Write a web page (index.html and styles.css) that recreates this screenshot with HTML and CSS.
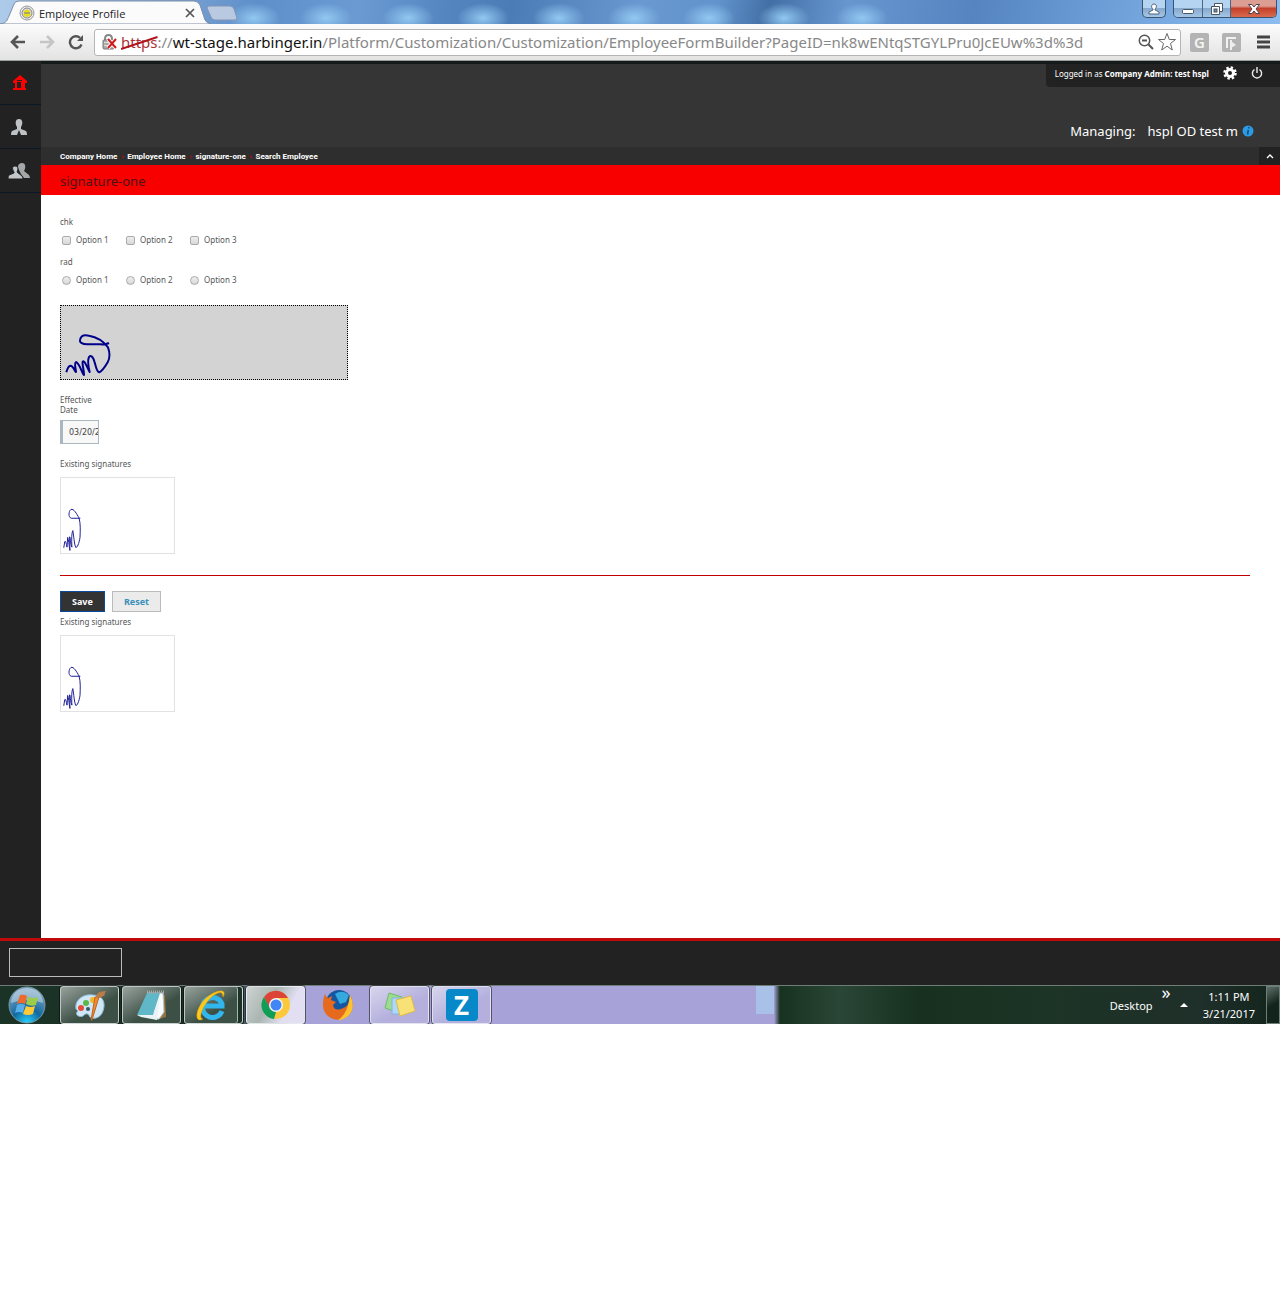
FILE: index.html
```
<!DOCTYPE html>
<html lang="en">
<head>
    <meta charset="UTF-8">
    <meta name="viewport" content="width=device-width, initial-scale=1.0">
    <title>Employee Profile</title>
    <link rel="stylesheet" href="styles.css">
</head>
<body>
    <!-- Shared shapes -->
    <svg class="defs" aria-hidden="true">
        <symbol id="smallSignature" viewBox="0 0 345 231">
            <path d="M58 124H30C20 121 22 102 29 97C38 93 47 111 54 123C59 141 58 161 57 183C54 203 48 215 44 214C39 203 38 179 35 162C31 169 31 189 32 213C27 201 27 181 25 181L26 223C23 207 22 189 19 183L17 213C14 198 12 192 10 196L7 215" fill="none" stroke="#1a1a95" stroke-width="3"/>
        </symbol>
    </svg>

    <div class="titlebar">
        <div class="tab">
            <svg class="tab-shape" viewBox="0 0 212 24" preserveAspectRatio="none"><path d="M0 24C7 23 7 20 9 16L14 4Q15 1 19 1H194Q198 1 200 5L205 20Q207 24 212 24Z" fill="#fbfbfc" stroke="#7c8ea6"/></svg>
            <svg class="favicon" viewBox="0 0 16 16"><circle cx="8" cy="8" r="7" fill="#eee" stroke="#999"/><circle cx="8" cy="8" r="5" fill="#d9d9dd" stroke="#888"/><path d="M4 7Q8 2 12 7L10 8L12 10Q8 14 4 10L6 8Z" fill="#e8dc20"/><path d="M5 8H11" stroke="#777"/></svg>
            <span class="tab-title">Employee Profile</span>
            <button class="tab-close" aria-label="Close tab"><svg width="10" height="10" viewBox="0 0 10 10"><path d="M1 1L9 9M9 1L1 9" stroke="#555" stroke-width="1.7"/></svg></button>
        </div>
        <button class="new-tab" aria-label="New tab"><svg width="32" height="16" viewBox="0 0 32 16"><path d="M3 1H24Q27 1 28 4L31 13Q31 15 29 15H9Q6 15 5 12L1 3Q1 1 3 1Z" fill="#b9c9e2" stroke="#8195b3"/></svg></button>
        <div class="window-buttons">
            <button class="user-btn" aria-label="User"><svg width="12" height="12" viewBox="0 0 12 12"><path d="M6 1C9 1 9 5 7 6V7L11 9V11H1V9L5 7V6C3 5 3 1 6 1Z" fill="#fff" stroke="#51657e"/></svg></button>
            <div class="window-group">
                <button aria-label="Minimize"><svg width="14" height="14" viewBox="0 0 14 14"><rect x="1.500" y="7.500" width="11" height="4" rx="1" fill="#fff" stroke="#4b5563"/></svg></button>
                <button aria-label="Restore"><svg width="14" height="14" viewBox="0 0 14 14"><path d="M4.500 1.500H12.500V9.500H4.500Z" fill="#fff" stroke="#4b5563"/><path d="M1.500 4.500H9.500V12.500H1.500Z" fill="#fff" stroke="#4b5563"/><rect x="4" y="7" width="3" height="3" fill="#6b89ad" stroke="#4b5563"/></svg></button>
                <button class="window-close" aria-label="Close"><svg width="14" height="14" viewBox="0 0 14 14"><path d="M1.500 2.500H5L7 5L9 2.500H12.500L9 7L12.500 11.500H9L7 9L5 11.500H1.500L5 7Z" fill="#fff" stroke="#54404a"/></svg></button>
            </div>
        </div>
    </div>

    <div class="toolbar">
        <button aria-label="Back"><svg width="16" height="14" viewBox="0 0 16 14"><path d="M8 1L2 7L8 13M2 7H15" fill="none" stroke="#555" stroke-width="2.6"/></svg></button>
        <button aria-label="Forward"><svg width="16" height="14" viewBox="0 0 16 14"><path d="M8 1L14 7L8 13M14 7H1" fill="none" stroke="#c5c5c5" stroke-width="2.6"/></svg></button>
        <button aria-label="Reload"><svg width="16" height="16" viewBox="0 0 16 16"><path d="M13.500 10.500A6 6 0 1 1 12 3.800" fill="none" stroke="#555" stroke-width="2.4"/><path d="M15 1V7H9Z" fill="#555"/></svg></button>
        <div class="address" role="textbox" aria-label="Address">
            <svg class="lock" width="16" height="16" viewBox="0 0 16 16"><path d="M3 7V5Q3 1 6.500 1Q10 1 10 5V7" fill="none" stroke="#888" stroke-width="2"/><rect x="1" y="6" width="11" height="9" rx="1" fill="#aaa" stroke="#777"/><path d="M2 8.500H9M2 11.500H9" stroke="#ddd"/><path d="M6 5L14 14M14 5L6 14" stroke="#fff" stroke-width="4"/><path d="M6 5L14 14M14 5L6 14" stroke="#d0181c" stroke-width="2"/></svg>
            <span class="url"><span class="scheme">https<svg class="strike" viewBox="0 0 38 14" preserveAspectRatio="none"><path d="M0 13L38 1" stroke="#b0151b" stroke-width="2"/></svg></span>://<span class="host">wt-stage.harbinger.in</span>/Platform/Customization/Customization/EmployeeFormBuilder?PageID=nk8wENtqSTGYLPru0JcEUw%3d%3d</span>
            <svg width="16" height="16" viewBox="0 0 16 16"><circle cx="6.500" cy="6.500" r="5.200" fill="none" stroke="#555" stroke-width="1.500"/><path d="M4 6.500H9M10.500 10.500L15 15" stroke="#555" stroke-width="2"/></svg>
            <svg width="20" height="20" viewBox="0 0 20 20"><path d="M10 1.500L12.300 7.500H18.500L13.500 11.500L15.300 18L10 14.200L4.700 18L6.500 11.500L1.500 7.500H7.700Z" fill="#fff" stroke="#666"/></svg>
        </div>
        <button class="extension" aria-label="Extension G">G</button>
        <button class="extension" aria-label="Extension"><svg width="19" height="19" viewBox="0 0 19 19"><path d="M5 15V5H14" fill="none" stroke="#f1f1f1" stroke-width="2"/><path d="M9 7V17" stroke="#eee" stroke-width="2"/><path d="M9 8L14 12L9 15Z" fill="#eee"/></svg></button>
        <button class="menu-btn" aria-label="Menu"><svg width="14" height="14" viewBox="0 0 14 14"><path d="M1 2H14M1 7H14M1 12H14" stroke="#444" stroke-width="2.800"/></svg></button>
    </div>

    <div class="app">
        <nav class="sidebar">
            <a href="#" aria-label="Home"><svg width="16" height="16" viewBox="0 0 16 16"><path d="M8 0L15 6V8H1V6Z" fill="#f00"/><path d="M3 7H13V13H14V15H1V13H3Z" fill="#f00"/><rect x="5" y="7" width="4" height="6" fill="#222"/><path d="M5 5.500H10" stroke="#222"/></svg></a>
            <a href="#" aria-label="Employee"><svg width="18" height="18" viewBox="0 0 18 18"><path d="M9 1C13 1 13 6 11 9V11L16 13Q17 14 17 17H11L9 12L7 17H1Q1 14 2 13L7 11V9C5 6 5 1 9 1Z" fill="#bfc2c4"/></svg></a>
            <a href="#" aria-label="Employees"><svg width="22" height="18" viewBox="0 0 22 18"><path d="M14 1C18 1 18 6 16 9L21 13Q22 15 22 16H16L13 12L11 8C9 5 10 1 14 1Z" fill="#a4a7a9"/><path d="M7 4C11 4 10 8 9 10L14 14Q15 15 15 17H0Q0 14 1 13L6 11V10C4 7 4 4 7 4Z" fill="#c3c6c8" stroke="#222"/></svg></a>
        </nav>

        <div class="page">
            <header class="header">
                <div class="user-bar">
                    <span>Logged in as <b>Company Admin: test hspl</b></span>
                    <a href="#" aria-label="Settings"><svg width="14" height="14" viewBox="0 0 14 14"><circle cx="7" cy="7" r="5.500" fill="none" stroke="#fff" stroke-width="2.500" stroke-dasharray="2.320 2"/><circle cx="7" cy="7" r="3.500" fill="none" stroke="#fff" stroke-width="3"/></svg></a>
                    <a href="#" aria-label="Log out"><svg width="12" height="12" viewBox="0 0 12 12"><path d="M3.500 2.500A4.600 4.600 0 1 0 8.500 2.500M6 0V6" fill="none" stroke="#eee" stroke-width="1.400"/></svg></a>
                </div>
                <div class="managing">
                    <span>Managing:</span>
                    <span>hspl OD test m</span>
                    <svg width="12" height="12" viewBox="0 0 12 12"><circle cx="6" cy="6" r="5.500" fill="#2c9be6"/><path d="M6.800 2V3.500M6.300 5L5.500 9.500" stroke="#174b75" stroke-width="1.600"/></svg>
                </div>
            </header>

            <nav class="breadcrumb">
                <a href="#">Company Home</a><span>»</span>
                <a href="#">Employee Home</a><span>»</span>
                <a href="#">signature-one</a><span>»</span>
                <a href="#">Search Employee</a>
                <button class="collapse-btn" aria-label="Collapse header"><svg width="8" height="6" viewBox="0 0 8 6"><path d="M1 5L4 2L7 5" fill="none" stroke="#fff" stroke-width="1.300"/></svg></button>
            </nav>

            <h1 class="page-title">signature-one</h1>

            <form class="content">
                <fieldset>
                    <legend>chk</legend>
                    <div class="options">
                        <label><input type="checkbox" name="chk">Option 1</label>
                        <label><input type="checkbox" name="chk">Option 2</label>
                        <label><input type="checkbox" name="chk">Option 3</label>
                    </div>
                </fieldset>
                <fieldset>
                    <legend>rad</legend>
                    <div class="options">
                        <label><input type="radio" name="rad">Option 1</label>
                        <label><input type="radio" name="rad">Option 2</label>
                        <label><input type="radio" name="rad">Option 3</label>
                    </div>
                </fieldset>

                <div class="signature-pad">
                    <svg width="144" height="73" viewBox="3 3 432 219"><path d="M147 114Q135 120 122 118H82C65 118 58 111 60 104C63 91 74 89 87 92C111 96 132 111 144 127C151 146 149 161 143 172C136 184 123 200 118 202C109 200 108 183 103 169C98 151 91 151 87 156C81 168 86 188 89 201C79 184 74 164 68 170C66 180 73 198 72 210C66 205 59 175 48 171C41 175 49 198 48 201C42 195 39 181 31 182C24 184 22 190 19 202" fill="none" stroke="#00008b" stroke-width="6" stroke-linejoin="round"/></svg>
                </div>

                <div class="date-field">
                    <label for="effectiveDate">Effective Date</label>
                    <input type="text" id="effectiveDate" value="03/20/2017">
                </div>

                <p class="caption">Existing signatures</p>
                <div class="signature-box"><svg><use href="#smallSignature"/></svg></div>

                <hr>

                <div class="actions">
                    <button type="submit" class="save-btn">Save</button>
                    <button type="reset" class="reset-btn">Reset</button>
                </div>

                <p class="caption">Existing signatures</p>
                <div class="signature-box"><svg><use href="#smallSignature"/></svg></div>
            </form>
        </div>
    </div>

    <footer class="footer">
        <div class="footer-logo"></div>
    </footer>

    <div class="taskbar">
        <button class="start" aria-label="Start"><svg width="38" height="38" viewBox="0 0 38 38">
            <defs><radialGradient id="orb" cx=".5" cy="1" r=".9"><stop offset="0" stop-color="#28d5ff"/><stop offset=".45" stop-color="#12689f"/><stop offset="1" stop-color="#78a2c3"/></radialGradient></defs>
            <circle cx="19" cy="19" r="18" fill="url(#orb)" stroke="#7897a3"/>
            <path d="M3 17Q4 3 19 2Q34 3 35 17Q19 11 3 17Z" fill="#d5e4ee" opacity=".5"/>
            <path d="M12 9Q16 8 19 10L17 18Q13 16 9 18Z" fill="#ee6a2c"/><path d="M20 11Q25 13 30 11L28 19Q23 21 18 18Z" fill="#9ccc48"/><path d="M9 19Q13 17 17 19L15 27Q11 25 7 27Z" fill="#58aee8"/><path d="M18 20Q23 22 27 20L25 28Q20 30 15 28Z" fill="#ffca35"/>
        </svg></button>
        <button class="task" aria-label="Paint"><svg width="34" height="34" viewBox="0 0 34 34"><path d="M3 21C1 12 11 5 20 7C30 7 33 15 30 23C28 30 20 32 17 29C15 25 13 25 10 28C6 30 1 26 5 23Z" fill="#cfe6f6" stroke="#89b9d6"/><circle cx="8" cy="20" r="3" fill="#e64c39"/><circle cx="13" cy="15" r="3" fill="#58b947"/><circle cx="20" cy="12" r="3" fill="#f4b52d"/><circle cx="15" cy="21" r="2" fill="#3a5866"/><path d="M26 9L19 32L18 32L22 9Z" fill="#ef8b31" stroke="#be6322"/><path d="M23 9Q23 3 33 3Q31 6 32 7L27 10Z" fill="#b87c49"/></svg></button>
        <button class="task" aria-label="Notepad"><svg width="34" height="34" viewBox="0 0 34 34"><path d="M15 6L30 7L31 29L24 31Z" fill="#98743d"/><path d="M13 5H28L29 24L24 31H20Z" fill="#f7fbfb" stroke="#b6c7cb"/><path d="M12 5H25L18 27H2Z" fill="#60b7c8"/><path d="M2 27H18L25 8L22 32L6 29Z" fill="#e9f3f5"/><path d="M12 4H29" stroke="#aaa" stroke-width="3" stroke-dasharray="1 1"/></svg></button>
        <button class="task stacked" aria-label="Internet Explorer"><svg width="34" height="34" viewBox="0 0 34 34"><path d="M28 23A10 10 0 1 1 28 16V18H9" fill="none" stroke="#31b7ed" stroke-width="5"/><path d="M29 9C34 0 22 1 11 11C1 21 0 36 9 31C3 31 10 14 20 7Q29 1 29 9Z" fill="#ffc91b" stroke="#d79e0d" stroke-width=".5"/></svg></button>
        <button class="task active" aria-label="Chrome"><svg width="32" height="32" viewBox="0 0 32 32"><circle cx="16" cy="16" r="14" fill="#fdc93c"/><path d="M4 8A14 14 0 0 1 28 9H16L10 20Z" fill="#db4437"/><path d="M4 8L10 19L16 23L14 30A14 14 0 0 1 4 8Z" fill="#0f9d58"/><circle cx="16" cy="16" r="7" fill="#f4f4f4"/><circle cx="16" cy="16" r="5.500" fill="#4285f4"/></svg></button>
        <button class="task plain" aria-label="Firefox"><svg width="32" height="32" viewBox="0 0 32 32"><circle cx="17" cy="14" r="13" fill="#1556a0"/><path d="M13 5Q20 0 27 6L24 13L18 15Z" fill="#35a9dd"/><path d="M3 5Q4 8 6 9L10 7L9 11L14 13L11 16Q12 22 19 20Q28 18 28 6Q34 18 27 26C17 36 1 29 1 16Q1 9 3 5Z" fill="#e56a1e"/><path d="M28 6Q34 18 27 26Q22 31 16 31Q26 25 28 6Z" fill="#ffc32d"/></svg></button>
        <button class="task" aria-label="Sticky Notes"><svg width="34" height="32" viewBox="0 0 34 32"><path d="M6 4L19 8L14 23L2 19Z" fill="#9ddb8d" stroke="#72bb6d"/><path d="M9 9H22V25H9Z" fill="#aed8f7" stroke="#82b4e3"/><path d="M13 11L28 7L32 22L17 27Z" fill="#f8e177" stroke="#dfbc42"/></svg></button>
        <button class="task" aria-label="Z"><span class="zoho">Z</span></button>
        <div class="tray">
            <span class="desktop">Desktop</span>
            <span class="chevrons">»</span>
            <svg width="8" height="5" viewBox="0 0 8 5"><path d="M4 0L8 4H0Z" fill="#fff"/></svg>
            <div class="clock"><div>1:11 PM</div><div>3/21/2017</div></div>
        </div>
        <button class="show-desktop" aria-label="Show desktop"></button>
    </div>
</body>
</html>
```
FILE: styles.css
```
* {
    margin: 0;
    padding: 0;
    box-sizing: border-box;
}

body {
    font-family: "Noto Sans", sans-serif;
    background: #fff;
}

button {
    font-family: inherit;
    border: none;
    background: none;
    cursor: pointer;
}

a {
    color: inherit;
    text-decoration: none;
}

svg {
    display: block;
    flex: none;
}

.defs {
    display: none;
}

/* Browser window */
.titlebar {
    display: flex;
    height: 24px;
    background:
        radial-gradient(ellipse 26px 15px at 254px 18px, #91c8f1, transparent),
        radial-gradient(ellipse 26px 15px at 326px 18px, #91c8f1, transparent),
        radial-gradient(ellipse 26px 15px at 408px 18px, #91c8f1, transparent),
        radial-gradient(ellipse 26px 15px at 483px 18px, #91c8f1, transparent),
        radial-gradient(ellipse 26px 15px at 559px 18px, #91c8f1, transparent),
        radial-gradient(ellipse 26px 15px at 634px 18px, #91c8f1, transparent),
        radial-gradient(ellipse 26px 15px at 709px 18px, #91c8f1, transparent),
        radial-gradient(ellipse 26px 15px at 784px 18px, #91c8f1, transparent),
        radial-gradient(ellipse 26px 15px at 862px 18px, #91c8f1, transparent),
        linear-gradient(100deg, #aecbea 0%, #5f8fc9 20%, #6b9ad3 28%, #5585bf 35%, #4c7cb6 40%, #6a98d0 50%, #6293cc 56%, #426fa5 60%, #6796cf 66%, #5584c0 76%, #76a8df 90%, #8cbcf0 100%);
}

.tab {
    position: relative;
    display: flex;
    align-items: center;
    width: 212px;
    padding: 2px 17px 0 19px;
    gap: 4px;
}

.tab-shape {
    position: absolute;
    left: 0;
    top: 0;
    width: 100%;
    height: 100%;
}

.favicon {
    position: relative;
    width: 16px;
    height: 16px;
}

.tab-title {
    position: relative;
    flex: 1;
    font-family: "Open Sans", sans-serif;
    font-size: 11px;
    color: #222;
    white-space: nowrap;
}

.tab-close {
    position: relative;
}

.new-tab {
    margin-left: -6px;
    padding: 0 0 3px;
    align-self: flex-end;
}

.window-buttons {
    display: flex;
    gap: 7px;
    align-items: flex-start;
    margin-left: auto;
    padding-right: 3px;
}

.window-buttons button {
    display: flex;
    align-items: center;
    justify-content: center;
    height: 17px;
    width: 28px;
    background: linear-gradient(#b5d4f2 45%, #86a9cd 50%, #a4c6e6);
}

.window-buttons .user-btn,
.window-group {
    border: 1px solid #3a5470;
    border-top: none;
    border-radius: 0 0 5px 5px;
    overflow: hidden;
}

.window-buttons .user-btn {
    width: 24px;
    height: 18px;
}

.window-group {
    display: flex;
}

.window-group button + button {
    border-left: 1px solid #4b6682;
}

.window-buttons .window-close {
    width: 46px;
    background: linear-gradient(#dc9d93 35%, #c4402a 50%, #d86a4e);
}

.toolbar {
    display: flex;
    align-items: center;
    gap: 13px;
    height: 37px;
    padding: 0 10px;
    background: linear-gradient(#fbfbfb, #e3e3e3);
    border-bottom: 1px solid #9aa09c;
}

.address {
    flex: 1;
    min-width: 0;
    display: flex;
    align-items: center;
    gap: 3px;
    height: 27px;
    padding: 0 3px 0 7px;
    margin-right: -4px;
    margin-left: -3px;
    background: #fff;
    border: 1px solid #b5b5b5;
    border-radius: 3px;
}

.url {
    flex: 1;
    font-size: 15px;
    line-height: 24px;
    color: #888;
    white-space: nowrap;
}

.scheme {
    position: relative;
    color: #a8343a;
}

.strike {
    position: absolute;
    left: 0;
    top: 4px;
    width: 100%;
    height: 14px;
}

.host {
    color: #111;
}

.extension {
    width: 19px;
    height: 19px;
    border-radius: 2px;
    background: #b3b3b3;
    color: #f3f3f3;
    font-size: 15px;
    font-weight: 600;
    line-height: 19px;
}

.menu-btn {
    margin-left: 2px;
}

/* Application */
.app {
    display: flex;
    min-height: 877px;
}

.sidebar {
    width: 41px;
    background: #222;
}

.sidebar a {
    display: flex;
    align-items: center;
    justify-content: center;
    height: 44px;
    padding-right: 4px;
    border-bottom: 1px solid #0c1726;
}

.sidebar a:first-child {
    padding-right: 2px;
}

.page {
    flex: 1;
    min-width: 0;
}

.header {
    display: flex;
    flex-direction: column;
    align-items: flex-end;
    height: 86px;
    background: #353535;
    border-top: 3px solid #141a1a;
}

.user-bar {
    display: flex;
    align-items: center;
    gap: 14px;
    height: 23px;
    padding: 0 17px 5px 9px;
    border-radius: 0 0 0 4px;
    background: #222;
    color: #fff;
    font-size: 8px;
}

.managing {
    display: flex;
    align-items: center;
    gap: 4px;
    padding: 34px 26px 0 0;
    color: #fff;
    font-size: 13px;
    line-height: 20px;
}

.managing span:first-child {
    margin-right: 8px;
}

.breadcrumb {
    display: flex;
    align-items: center;
    gap: 3px;
    height: 18px;
    padding-left: 19px;
    background: #2e2e2e;
    color: #fff;
    font-family: Roboto, sans-serif;
    font-size: 8px;
    font-weight: bold;
}

.breadcrumb span {
    color: #a01010;
    font-weight: normal;
}

.collapse-btn {
    display: flex;
    align-items: center;
    justify-content: center;
    width: 21px;
    height: 18px;
    margin-left: auto;
    background: #222;
}

.page-title {
    padding: 2px 19px 0;
    background: #f80000;
    color: #4a1414;
    font-size: 13px;
    font-weight: normal;
    line-height: 28px;
}

.content {
    padding: 22px 30px 20px 19px;
    font-size: 8px;
    line-height: 10px;
    color: #555;
}

fieldset {
    border: none;
    margin-bottom: 12px;
}

.options {
    display: flex;
    padding-top: 8px;
}

.options label {
    display: flex;
    align-items: center;
    gap: 5px;
    width: 64px;
    height: 10px;
    padding-left: 2px;
}

.options input {
    appearance: none;
    width: 9px;
    height: 9px;
    border: 1px solid #aaa;
    border-radius: 2px;
    background: linear-gradient(#eee, #d8d8d8);
}

.options input[type="radio"] {
    border-radius: 50%;
}

.options input:checked {
    background: #555;
}

.signature-pad {
    width: 288px;
    height: 75px;
    margin: 20px 0 15px;
    border: 1px dotted #000;
    background: #d3d3d3;
}

.date-field {
    width: 39px;
    margin-bottom: 15px;
}

.date-field label {
    display: block;
    margin-bottom: 5px;
}

.date-field input {
    display: block;
    width: 100%;
    height: 24px;
    padding-left: 6px;
    border: 1px solid #a9b8c0;
    border-left-width: 3px;
    background: #f8f8f8;
    color: #444;
    font-family: "DejaVu Sans", sans-serif;
    font-size: 8px;
}

.signature-box {
    width: 115px;
    height: 77px;
    margin-top: 8px;
    border: 1px solid #e2e2e2;
}

.signature-box svg {
    width: 100%;
    height: 100%;
}

hr {
    margin: 21px 0 15px;
    border: none;
    border-top: 1px solid #c00000;
}

.actions {
    display: flex;
    gap: 7px;
    margin-bottom: 5px;
}

.actions button {
    height: 21px;
    padding: 0 11px;
    border: 1px solid #bbb;
    font-size: 9px;
    font-weight: bold;
}

.actions .save-btn {
    border-color: #0a4a9c;
    background: #333;
    color: #fff;
}

.actions .reset-btn {
    background: #ebebeb;
    color: #3a8fba;
}

.footer {
    height: 47px;
    padding: 7px 9px;
    border-top: 3px solid #c00a0a;
    background: #222;
}

.footer-logo {
    width: 113px;
    height: 29px;
    border: 1px solid #bbb;
}

/* Windows taskbar */
.taskbar {
    display: flex;
    height: 39px;
    gap: 3px;
    padding-left: 8px;
    border-top: 1px solid #6f7d78;
    background:
        linear-gradient(90deg, #a9c0e8, #a9c0e8) 756px 0 / 18px 28px no-repeat,
        linear-gradient(90deg, #1b3226 242px, #a7a2d8 250px, #a7a2d8 774px, #17321f 780px, #2a4636 840px, #17301f 920px, #1c3425 1040px, #1f2f2a 1200px, #12241c);
    color: #fff;
}

.start {
    width: 38px;
    margin-right: 11px;
}

.task {
    display: flex;
    align-items: center;
    justify-content: center;
    width: 59px;
    border: 1px solid rgba(235, 240, 240, 0.75);
    border-radius: 3px;
    outline: 1px solid rgba(0, 0, 0, 0.5);
    outline-offset: 0;
    background: linear-gradient(150deg, rgba(255, 255, 255, 0.55), rgba(255, 255, 255, 0.15) 60%);
}

.task.stacked {
    padding-right: 5px;
    box-shadow: inset -4px 0 0 #1b3226, inset -5px 0 0 #a8b4ae;
}

.task.active {
    background: linear-gradient(120deg, #cdd3d2, #a9b5b1 40%, #e2dff3 70%);
}

.task.plain {
    border-color: transparent;
    outline: none;
    background: none;
}

.zoho {
    width: 32px;
    height: 32px;
    border-radius: 4px;
    background: #0788c8;
    color: #fff;
    font-size: 26px;
    font-weight: bold;
    line-height: 32px;
}

.tray {
    display: flex;
    align-items: center;
    gap: 9px;
    margin-left: auto;
    font-size: 11px;
}

.chevrons {
    align-self: flex-start;
    font-size: 18px;
    line-height: 12px;
}

.clock {
    text-align: center;
    line-height: 17px;
    padding: 0 8px 0 6px;
}

.show-desktop {
    width: 14px;
    border: 1px solid #6c7f78;
    background: linear-gradient(150deg, #5f6e69, #12241c 50%);
}
```
